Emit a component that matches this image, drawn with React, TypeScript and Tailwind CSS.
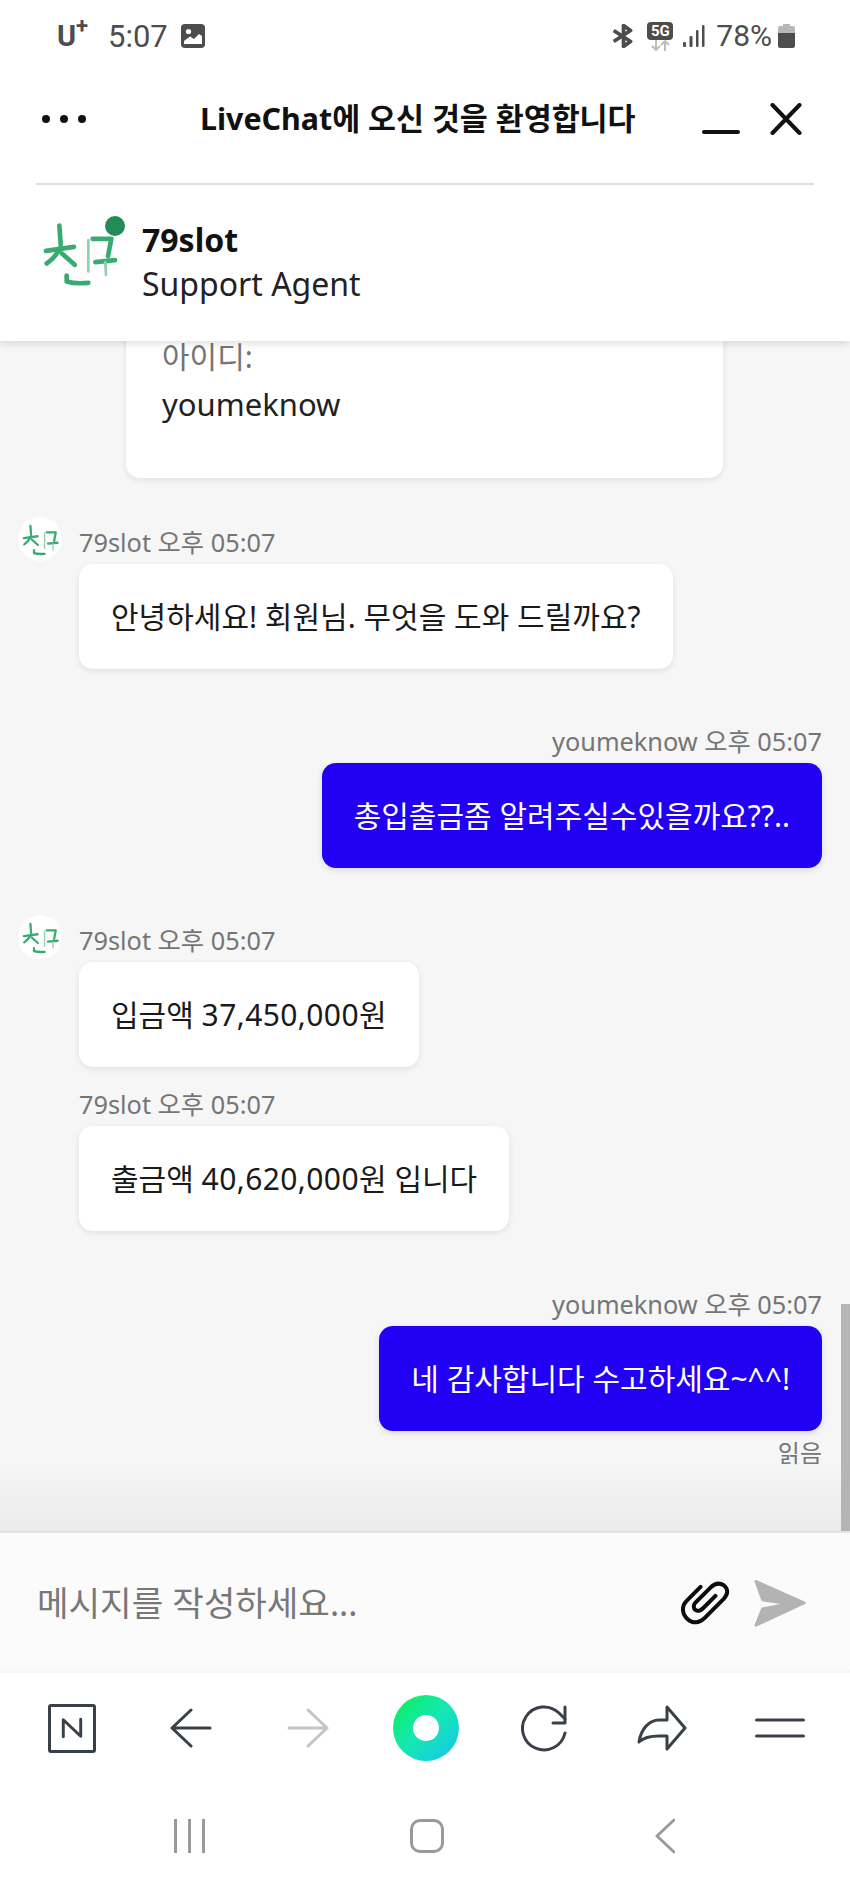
import React from 'react';

const font = "font-['Noto_Sans','Noto_Sans_CJK_KR',sans-serif]";

function Logo({ className }: { className: string }) {
  return (
    <svg viewBox="60 60 240 200" className={className} fill="none" stroke="#3aab70" strokeLinecap="round" strokeLinejoin="round">
      <g strokeWidth="14">
        <path d="M118 76 L122 132" />
        <path d="M78 152 L162 140" />
        <path d="M122 140 C112 162 98 178 80 190" />
        <path d="M126 160 L164 194" />
        <path d="M140 226 L140 244 C160 250 185 250 205 248" />
        <path d="M218 116 L274 116 L264 168" />
        <path d="M226 186 L285 180" />
      </g>
      <g strokeWidth="8" stroke="#8fd0ad">
        <path d="M205 120 L205 214" />
        <path d="M256 186 L258 224" />
      </g>
    </svg>
  );
}

function Meta({ children, right }: { children: React.ReactNode; right?: boolean }) {
  return (
    <div className={`h-[36px] text-[25.3px] leading-[36px] text-[#757575] whitespace-nowrap ${right ? 'text-right' : ''}`}>
      {children}
    </div>
  );
}

function AgentBubble({ children }: { children: React.ReactNode }) {
  return (
    <div className="mt-[4px] h-[105px] w-fit rounded-[14px] bg-white px-[32px] flex items-center text-[30px] text-[#1a1a1a] whitespace-pre shadow-[0_2px_6px_rgba(0,0,0,0.09)]">
      {children}
    </div>
  );
}

function UserBubble({ children }: { children: React.ReactNode }) {
  return (
    <div className="mt-[4px] h-[105px] w-fit ml-auto rounded-[14px] bg-[#2200f4] px-[32px] flex items-center text-[30px] text-white whitespace-nowrap shadow-[0_2px_6px_rgba(0,0,0,0.12)]">
      {children}
    </div>
  );
}

function Avatar() {
  return (
    <div className="-mt-[1px] w-[44px] h-[44px] rounded-full bg-white flex items-center justify-center shrink-0">
      <Logo className="w-[39px] h-[33px]" />
    </div>
  );
}

function StatusBar() {
  return (
    <div className="h-[72px] pl-[57px] pr-[55px] flex items-center justify-between text-[#4d4d4d] font-['Roboto',sans-serif]">
      <div className="flex items-center">
        <span className="relative w-[32px] text-[29px] font-bold leading-none">
          U<span className="absolute left-[19px] top-[-7px] text-[22px]">+</span>
        </span>
        <span className="ml-[19px] text-[31px] leading-none">5:07</span>
        <svg viewBox="0 0 24 24" className="ml-[13px] w-[24px] h-[24px]">
          <rect width="24" height="24" rx="4" fill="#4d4d4d" />
          <circle cx="7.5" cy="7.5" r="2.6" fill="#fff" />
          <path d="M3 20 V17 L9 12.5 L13 15 L18 10 L21 12 V20 Z" fill="#fff" />
        </svg>
      </div>
      <div className="flex items-center">
        <svg viewBox="0 0 21 22" className="w-[23px] h-[24px]" fill="none" stroke="#4d4d4d" strokeWidth="3.4" strokeLinejoin="round">
          <path d="M1.5 6 L17 16 L10.5 20.5 V1.5 L17 6 L1.5 16" />
        </svg>
        <div className="ml-[12px] w-[26px] flex flex-col items-center">
          <div className="w-[26px] h-[18px] rounded-[4px] bg-[#4d4d4d] text-white text-[15px] font-bold leading-[18px] text-center">5G</div>
          <svg viewBox="0 0 24 11" className="w-[24px] h-[11px]" fill="none" stroke="#bdbdbd" strokeWidth="2">
            <path d="M8 0 V10 M4 6 L8 10 L12 6" />
            <path d="M17 11 V1 M13 5 L17 1 L21 5" />
          </svg>
        </div>
        <svg viewBox="0 0 22 22" className="ml-[10px] w-[22px] h-[22px]" fill="#4d4d4d">
          <rect x="0" y="17" width="3" height="5" rx="1" />
          <rect x="6.5" y="11" width="3" height="11" rx="1" />
          <rect x="13" y="5" width="2.5" height="17" rx="1" />
          <rect x="19" y="0" width="2.5" height="22" rx="1" />
        </svg>
        <span className="ml-[11px] text-[30px] leading-none">78%</span>
        <svg viewBox="0 0 17 24" className="ml-[6px] w-[17px] h-[24px]">
          <path d="M5 0 H12 V2 H15 Q17 2 17 4 V9 H0 V4 Q0 2 2 2 H5 Z" fill="#b8b8b8" />
          <path d="M0 9 H17 V21.5 Q17 24 14.5 24 H2.5 Q0 24 0 21.5 Z" fill="#4d4d4d" />
        </svg>
      </div>
    </div>
  );
}

function Header() {
  return (
    <div className="relative z-10 bg-white shadow-[0_2px_8px_rgba(0,0,0,0.14)]">
      <StatusBar />
      <div className="h-[94px] mb-[17px] pl-[42px] pr-[48px] flex items-center">
        <div className="flex gap-[10px]">
          <span className="w-[8px] h-[8px] rounded-full bg-[#111]" />
          <span className="w-[8px] h-[8px] rounded-full bg-[#111]" />
          <span className="w-[8px] h-[8px] rounded-full bg-[#111]" />
        </div>
        <div className="ml-[114px] text-[30.4px] font-bold text-[#111] whitespace-nowrap">LiveChat에 오신 것을 환영합니다</div>
        <div className="ml-auto flex items-center">
          <span className="mt-[25px] w-[38px] h-[4px] rounded-full bg-[#111]" />
          <svg viewBox="0 0 32 32" className="ml-[30px] w-[32px] h-[32px]" fill="none" stroke="#111" strokeWidth="4" strokeLinecap="round">
            <path d="M2.5 2 L29.5 30 M29.5 2 L2.5 30" />
          </svg>
        </div>
      </div>
      <div className="mx-[36px] h-[2px] bg-[#dedede]" />
      <div className="h-[156px] pl-[40px] flex items-start">
        <div className="relative mt-[35px] w-[80px] h-[67px]">
          <Logo className="w-[80px] h-[67px]" />
          <span className="absolute left-[65px] top-[-4px] w-[20px] h-[20px] rounded-full bg-[#228b56]" />
        </div>
        <div className="ml-[22px] mt-[33px]">
          <div className="h-[44px] text-[32px] font-bold leading-[44px] text-[#111]">79slot</div>
          <div className="h-[44px] text-[32px] leading-[44px] text-[#222]">Support Agent</div>
        </div>
      </div>
    </div>
  );
}

function Chat() {
  return (
    <div className="relative flex-1 min-h-0 overflow-hidden bg-[#f6f6f6] flex flex-col justify-end">
      <div className="shrink-0 ml-[126px] w-[597px] h-[170px] rounded-[14px] bg-white pl-[36px] flex flex-col justify-end pb-[50px] shadow-[0_2px_6px_rgba(0,0,0,0.09)]">
        <div className="h-[26px] text-[30px] leading-[26px] text-[#757575]">아이디:</div>
        <div className="mt-[10px] h-[48px] text-[31px] leading-[48px] text-[#222]">youmeknow</div>
      </div>

      <div className="shrink-0 mt-[40px] pl-[18px] flex gap-[17px]">
        <Avatar />
        <div className="mt-[6px]">
          <Meta>79slot 오후 05:07</Meta>
          <AgentBubble>안녕하세요! 회원님. 무엇을 도와 드릴까요?</AgentBubble>
        </div>
      </div>

      <div className="shrink-0 mt-[54px] pr-[28px]">
        <Meta right>youmeknow 오후 05:07</Meta>
        <UserBubble>총입출금좀 알려주실수있을까요??..</UserBubble>
      </div>

      <div className="shrink-0 mt-[48px] pl-[18px] flex gap-[17px]">
        <Avatar />
        <div className="mt-[6px]">
          <Meta>79slot 오후 05:07</Meta>
          <AgentBubble>입금액 <span className="tracking-[0.4px]">37,450,000</span>원</AgentBubble>
          <div className="mt-[19px]">
            <Meta>79slot 오후 05:07</Meta>
          </div>
          <AgentBubble>출금액 <span className="tracking-[0.4px]">40,620,000</span>원 입니다</AgentBubble>
        </div>
      </div>

      <div className="shrink-0 mt-[55px] pr-[28px]">
        <Meta right>youmeknow 오후 05:07</Meta>
        <UserBubble>네 감사합니다 수고하세요~^^!</UserBubble>
        <div className="mt-[4px] text-[24px]">
          <div className="h-[36px] leading-[36px] text-right text-[#757575]">읽음</div>
        </div>
      </div>
      <div className="shrink-0 h-[60px]" />

      <div className="absolute left-0 right-0 bottom-0 h-[70px] bg-linear-to-b from-transparent to-[#ebebeb]" />
      <div className="absolute right-0 bottom-0 w-[9px] h-[227px] bg-[#b5b5b5]" />
    </div>
  );
}

function Composer() {
  return (
    <div className="h-[142px] border-t-2 border-[#e4e4e4] bg-[#fbfbfb] pl-[37px] pr-[42px] flex items-center shadow-[inset_0_-6px_6px_-6px_rgba(0,0,0,0.06)]">
      <div className="flex-1 text-[34.3px] text-[#777] whitespace-nowrap">메시지를 작성하세요...</div>
      <svg viewBox="55 60 160 140" className="w-[53px] h-[47px]" fill="none" stroke="#0d0d0d" strokeWidth="12" strokeLinecap="round">
        <path d="M120 80 L78 122 C60 140 66 165 82 178 C98 192 118 188 132 174 L190 116 C205 100 203 85 190 75 C176 66 162 70 150 82 L104 128 C96 138 100 150 110 152 C118 154 124 148 130 142 L165 107" />
      </svg>
      <svg viewBox="280 55 165 148" className="ml-[21px] w-[55px] h-[49px]" fill="#b3b3b3" stroke="#b3b3b3" strokeWidth="8" strokeLinejoin="round">
        <path d="M288 62 L435 127 L288 195 L308 145 L385 130 L308 118 Z" />
      </svg>
    </div>
  );
}

function BrowserBar() {
  const ink = '#3a4047';
  return (
    <div className="h-[110px] bg-white pl-[13px] pr-[11px] grid grid-cols-7 items-center justify-items-center">
      <div className="w-[48px] h-[49px] rounded-[3px] border-[3px] border-[#3a4047] flex items-center justify-center">
        <svg viewBox="0 0 24 24" className="w-[22px] h-[22px]" fill="none" stroke={ink} strokeWidth="3.2" strokeLinecap="round" strokeLinejoin="round">
          <path d="M2.5 21.5 V3 L21.5 21 V2.5" />
        </svg>
      </div>
      <svg viewBox="0 0 42 40" className="ml-[2px] w-[42px] h-[40px]" fill="none" stroke={ink} strokeWidth="3" strokeLinecap="round" strokeLinejoin="round">
        <path d="M40 20 H2 M21 2 L2 20 L21 38" />
      </svg>
      <svg viewBox="0 0 42 40" className="w-[42px] h-[40px]" fill="none" stroke="#c4c4c4" strokeWidth="3" strokeLinecap="round" strokeLinejoin="round">
        <path d="M2 20 H40 M21 2 L40 20 L21 38" />
      </svg>
      <div className="w-[66px] h-[66px] rounded-full bg-linear-to-br from-[#14f03a] via-[#18e6b4] to-[#1cc4ea] flex items-center justify-center">
        <span className="w-[26px] h-[26px] rounded-full bg-white" />
      </div>
      <svg viewBox="0 0 46 48" className="w-[46px] h-[48px]" fill="none" stroke={ink} strokeWidth="3" strokeLinecap="round" strokeLinejoin="round">
        <path d="M44 29 A21.5 21.5 0 1 1 38 9 L44 15" />
        <path d="M44 3 V19 H32" />
      </svg>
      <svg viewBox="0 0 50 46" className="w-[50px] h-[46px]" fill="none" stroke={ink} strokeWidth="3" strokeLinecap="round" strokeLinejoin="round">
        <path d="M30 2 L48 23 L30 44 V31 H22 C14 31 6 33 2 37 C4 24 12 15 22 15 H30 Z" />
      </svg>
      <svg viewBox="0 0 50 20" className="w-[50px] h-[20px]" fill="none" stroke={ink} strokeWidth="3" strokeLinecap="round">
        <path d="M1.5 2 H48.5 M1.5 18 H48.5" />
      </svg>
    </div>
  );
}

function NavBar() {
  return (
    <div className="h-[106px] bg-white pl-[70px] pr-[66px] grid grid-cols-3 items-center justify-items-center">
      <div className="flex gap-[11px]">
        <span className="w-[3px] h-[34px] bg-[#9a9a9a]" />
        <span className="w-[3px] h-[34px] bg-[#9a9a9a]" />
        <span className="w-[3px] h-[34px] bg-[#9a9a9a]" />
      </div>
      <div className="w-[34px] h-[34px] rounded-[10px] border-[3px] border-[#9a9a9a]" />
      <svg viewBox="0 0 20 36" className="w-[20px] h-[36px]" fill="none" stroke="#9a9a9a" strokeWidth="3" strokeLinecap="round" strokeLinejoin="round">
        <path d="M19 2 L2 18 L19 34" />
      </svg>
    </div>
  );
}

export default function App() {
  return (
    <div className={`w-[850px] h-[1889px] flex flex-col bg-white ${font}`}>
      <Header />
      <Chat />
      <Composer />
      <BrowserBar />
      <NavBar />
    </div>
  );
}
